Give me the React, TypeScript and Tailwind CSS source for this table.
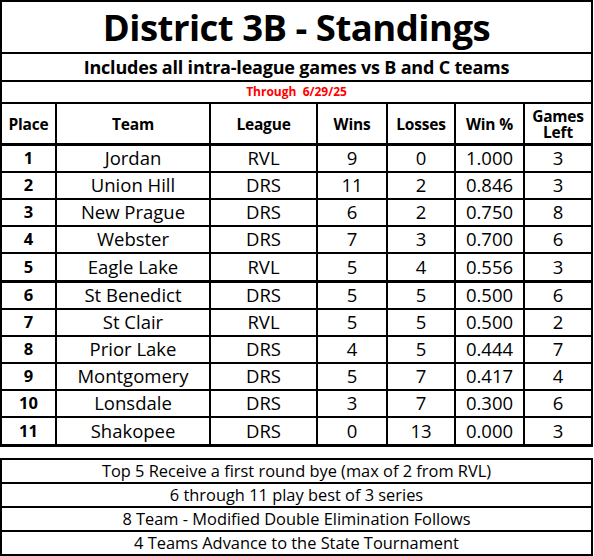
import React from "react";

const rows = [
  ["1", "Jordan", "RVL", "9", "0", "1.000", "3"],
  ["2", "Union Hill", "DRS", "11", "2", "0.846", "3"],
  ["3", "New Prague", "DRS", "6", "2", "0.750", "8"],
  ["4", "Webster", "DRS", "7", "3", "0.700", "6"],
  ["5", "Eagle Lake", "RVL", "5", "4", "0.556", "3"],
  ["6", "St Benedict", "DRS", "5", "5", "0.500", "6"],
  ["7", "St Clair", "RVL", "5", "5", "0.500", "2"],
  ["8", "Prior Lake", "DRS", "4", "5", "0.444", "7"],
  ["9", "Montgomery", "DRS", "5", "7", "0.417", "4"],
  ["10", "Lonsdale", "DRS", "3", "7", "0.300", "6"],
  ["11", "Shakopee", "DRS", "0", "13", "0.000", "3"],
];

const notes = [
  "Top 5 Receive a first round bye (max of 2 from RVL)",
  "6 through 11 play best of 3 series",
  "8 Team - Modified Double Elimination Follows",
  "4 Teams Advance to the State Tournament",
];

const cols = "grid grid-cols-[55px_154px_107px_70px_68px_69px_66px]";

const App = () => {
  return (
    <div className="w-[594px] h-[556px] bg-white text-black font-['Open_Sans',sans-serif]">
      <div className="w-[593px] border-x-2 border-t-2 border-black">
        <div className="h-[52px] border-b-2 border-black flex items-center justify-center">
          <h1 className="text-[36.5px] font-bold leading-none tracking-[-0.5px]">District 3B - Standings</h1>
        </div>
        <div className="h-[28px] border-b-2 border-black flex items-center justify-center">
          <h2 className="text-[18px] font-bold leading-none tracking-[-0.2px]">Includes all intra-league games vs B and C teams</h2>
        </div>
        <div className="h-[22px] border-b-2 border-black flex items-center justify-center">
          <span className="text-[12px] font-bold leading-none text-[#ff0000] whitespace-pre">Through  6/29/25</span>
        </div>

        <div className={`${cols} h-[42px] border-b-[3px] border-black text-[15.5px] font-bold leading-[16px] tracking-[-0.2px]`}>
          <div className="border-r-2 border-black flex items-center justify-center">Place</div>
          <div className="border-r-2 border-black flex items-center justify-center">Team</div>
          <div className="border-r-2 border-black flex items-center justify-center">League</div>
          <div className="border-r-2 border-black flex items-center justify-center">Wins</div>
          <div className="border-r-2 border-black flex items-center justify-center">Losses</div>
          <div className="border-r-2 border-black flex items-center justify-center">Win %</div>
          <div className="flex items-center justify-center text-center">
            Games
            <br />
            Left
          </div>
        </div>

        {rows.map((r, i) => {
          const thick = i === 4 || i === 10;
          return (
            <div
              key={r[0]}
              className={`${cols} ${thick ? "h-[29px] border-b-[3px]" : "h-[27px] border-b-2"} border-black text-[18.5px] leading-none`}
            >
              {r.map((c, j) => (
                <div
                  key={j}
                  className={`flex items-center justify-center ${j < 6 ? "border-r-2 border-black" : ""} ${j === 0 ? "font-bold text-[16.5px]" : ""}`}
                >
                  {c}
                </div>
              ))}
            </div>
          );
        })}
      </div>

      <div className="mt-[11px] w-[593px] border-2 border-black">
        {notes.map((n, i) => (
          <div
            key={n}
            className={`${i < 3 ? "h-[24px] border-b-2 border-black" : "h-[22px]"} flex items-center justify-center text-[16.4px] leading-none`}
          >
            {n}
          </div>
        ))}
      </div>
    </div>
  );
};

export default App;
